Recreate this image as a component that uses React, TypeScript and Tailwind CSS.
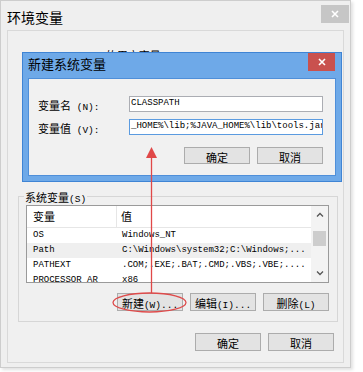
const CJK = "font-['Noto_Sans_CJK_SC',sans-serif]";
const MONO = "font-['Liberation_Mono',monospace]";

function Lbl({ zh, en, pre }: { zh: string; en?: string; pre?: string }) {
  return (
    <span className="whitespace-nowrap text-black leading-none">
      {pre && <span className={`${MONO} text-[9.5px]`}>{pre}</span>}
      <span className={`${CJK} text-[11px]`}>{zh}</span>
      {en && <span className={`${MONO} text-[9.5px]`}>{en}</span>}
    </span>
  );
}

function Btn({ zh, en, h = "h-[18px]" }: { zh: string; en?: string; h?: string }) {
  return (
    <div className={`w-[66px] ${h} flex items-center justify-center bg-[#e3e3e3] border border-[#acacac] leading-none`}>
      <Lbl zh={zh} en={en} />
    </div>
  );
}

function CloseX() {
  return (
    <svg width="8" height="8" viewBox="0 0 8 8">
      <path d="M1 1L7 7M7 1L1 7" stroke="white" strokeWidth="1.6" />
    </svg>
  );
}

function Chevron({ up }: { up?: boolean }) {
  return (
    <svg width="8" height="5" viewBox="0 0 8 5">
      <path d={up ? "M1 4.5L4 1.5L7 4.5" : "M1 0.5L4 3.5L7 0.5"} stroke="#555" strokeWidth="1.3" fill="none" />
    </svg>
  );
}

const rows = [
  { name: "OS", value: "Windows_NT" },
  { name: "Path", value: "C:\\Windows\\system32;C:\\Windows;...", active: true },
  { name: "PATHEXT", value: ".COM;.EXE;.BAT;.CMD;.VBS;.VBE;...." },
  { name: "PROCESSOR_AR", value: "x86" },
];

export default function App() {
  return (
    <div className="relative w-[363px] h-[372px] bg-white overflow-hidden">
      {/* 环境变量 window */}
      <div className="w-[351px] h-[368px] bg-[#efefef] border border-[#cdcdcd] shadow-[2px_2px_3px_rgba(0,0,0,0.12)] flex flex-col">
        <div className="h-[29px] flex items-start justify-between shrink-0">
          <span className={`${CJK} text-[14px] leading-[18px] mt-[7px] pl-[6px] text-black`}>环境变量</span>
          <div className="mt-[4px] mr-[1px] w-[28px] h-[18px] bg-[#c6c6c6] flex items-center justify-center">
            <CloseX />
          </div>
        </div>
        <div className="mx-[6px] h-[333px] border border-[#d9d9d9] bg-[#f0f0f0] flex flex-col">
          <div className="mt-[16px] pl-[18px] h-[14px] shrink-0 flex items-center">
            <Lbl pre="Administrator " zh="的用户变量" en="(U)" />
          </div>
          <div className="h-[126px] shrink-0" />
          <fieldset className="ml-[10px] w-[320px] border border-[#d6d6d6] pl-[7px] pr-[8px] pb-[10px]">
            <legend className="-ml-[2px] px-[1px] h-[18px] flex items-start pt-[1px]">
              <Lbl zh="系统变量" en="(S)" />
            </legend>
            <div className="w-[303px] h-[78px] border border-[#9a9a9a] bg-white flex overflow-hidden">
              <div className="flex-1 flex flex-col overflow-hidden">
                <div className="h-[22px] shrink-0 flex border-b border-[#e6e6e6]">
                  <div className="w-[90px] pl-[6px] flex items-center border-r border-[#e6e6e6]">
                    <span className={`${CJK} text-[11px] leading-none text-black`}>变量</span>
                  </div>
                  <div className="pl-[4px] flex items-center">
                    <span className={`${CJK} text-[11px] leading-none text-black`}>值</span>
                  </div>
                </div>
                {rows.map((r) => (
                  <div
                    key={r.name}
                    className={`h-[15px] shrink-0 flex items-center ${MONO} text-[9px] leading-none text-black whitespace-nowrap ${r.active ? "bg-[#efefef]" : ""}`}
                  >
                    <div className="w-[90px] pl-[6px]">{r.name}</div>
                    <div className="pl-[5px]">{r.value}</div>
                  </div>
                ))}
              </div>
              <div className="w-[17px] bg-[#f3f3f3] flex flex-col items-center">
                <div className="h-[17px] flex items-center justify-center">
                  <Chevron up />
                </div>
                <div className="mt-[8px] w-[13px] h-[15px] bg-[#cdcdcd]" />
                <div className="flex-1" />
                <div className="h-[17px] flex items-center justify-center">
                  <Chevron />
                </div>
              </div>
            </div>
            <div className="mt-[10px] flex justify-end gap-[7px]">
              <Btn zh="新建" en="(W)..." />
              <Btn zh="编辑" en="(I)..." />
              <Btn zh="删除" en="(L)" />
            </div>
          </fieldset>
          <div className="mt-[11px] pr-[9px] flex justify-end gap-[7px]">
            <Btn zh="确定" />
            <Btn zh="取消" />
          </div>
        </div>
      </div>

      {/* 新建系统变量 dialog, lying over the window */}
      <div className="absolute left-[22px] top-[52px] w-[320px] h-[130px] bg-[#6ea9e8] border border-[#3f84d4] flex flex-col">
        <div className="h-[25px] shrink-0 flex items-start justify-between">
          <span className={`${CJK} text-[13px] leading-[22px] pl-[5px] text-black`}>新建系统变量</span>
          <div className="w-[27px] h-[18px] mr-[6px] bg-[#c9514e] flex items-center justify-center">
            <CloseX />
          </div>
        </div>
        <div className="mx-[5px] mb-[5px] flex-1 bg-[#f1f1f1] border border-[#4f8fd9] pt-[17px] pl-[9px] pr-[12px] flex flex-col">
          <div className="flex items-center h-[16px]">
            <div className="w-[92px] flex items-center">
              <Lbl zh="变量名" en=" (N):" />
            </div>
            <div className={`w-[196px] h-[16px] bg-white border border-[#abadb3] pl-[1px] flex items-center ${MONO} text-[9px] text-black whitespace-nowrap overflow-hidden`}>
              CLASSPATH
            </div>
          </div>
          <div className="mt-[7px] flex items-center h-[16px]">
            <div className="w-[92px] flex items-center">
              <Lbl zh="变量值" en=" (V):" />
            </div>
            <div className={`w-[196px] h-[16px] bg-white border border-[#5b9be0] pl-[1px] flex items-center ${MONO} text-[9px] text-black whitespace-nowrap overflow-hidden`}>
              _HOME%\lib;%JAVA_HOME%\lib\tools.jar
            </div>
          </div>
          <div className="mt-[12px] flex justify-end gap-[7px]">
            <Btn zh="确定" h="h-[17px]" />
            <Btn zh="取消" h="h-[17px]" />
          </div>
        </div>
      </div>

      {/* red annotation */}
      <svg className="absolute left-0 top-0 pointer-events-none" width="363" height="372">
        <line x1="151.5" y1="156" x2="151.5" y2="293" stroke="#e04848" strokeWidth="1.3" />
        <polygon points="151.5,147 146,158 157,158" fill="#e04848" />
        <ellipse cx="149.5" cy="302.5" rx="36.5" ry="9.5" fill="none" stroke="#de4b4b" strokeWidth="1.3" />
      </svg>
    </div>
  );
}
